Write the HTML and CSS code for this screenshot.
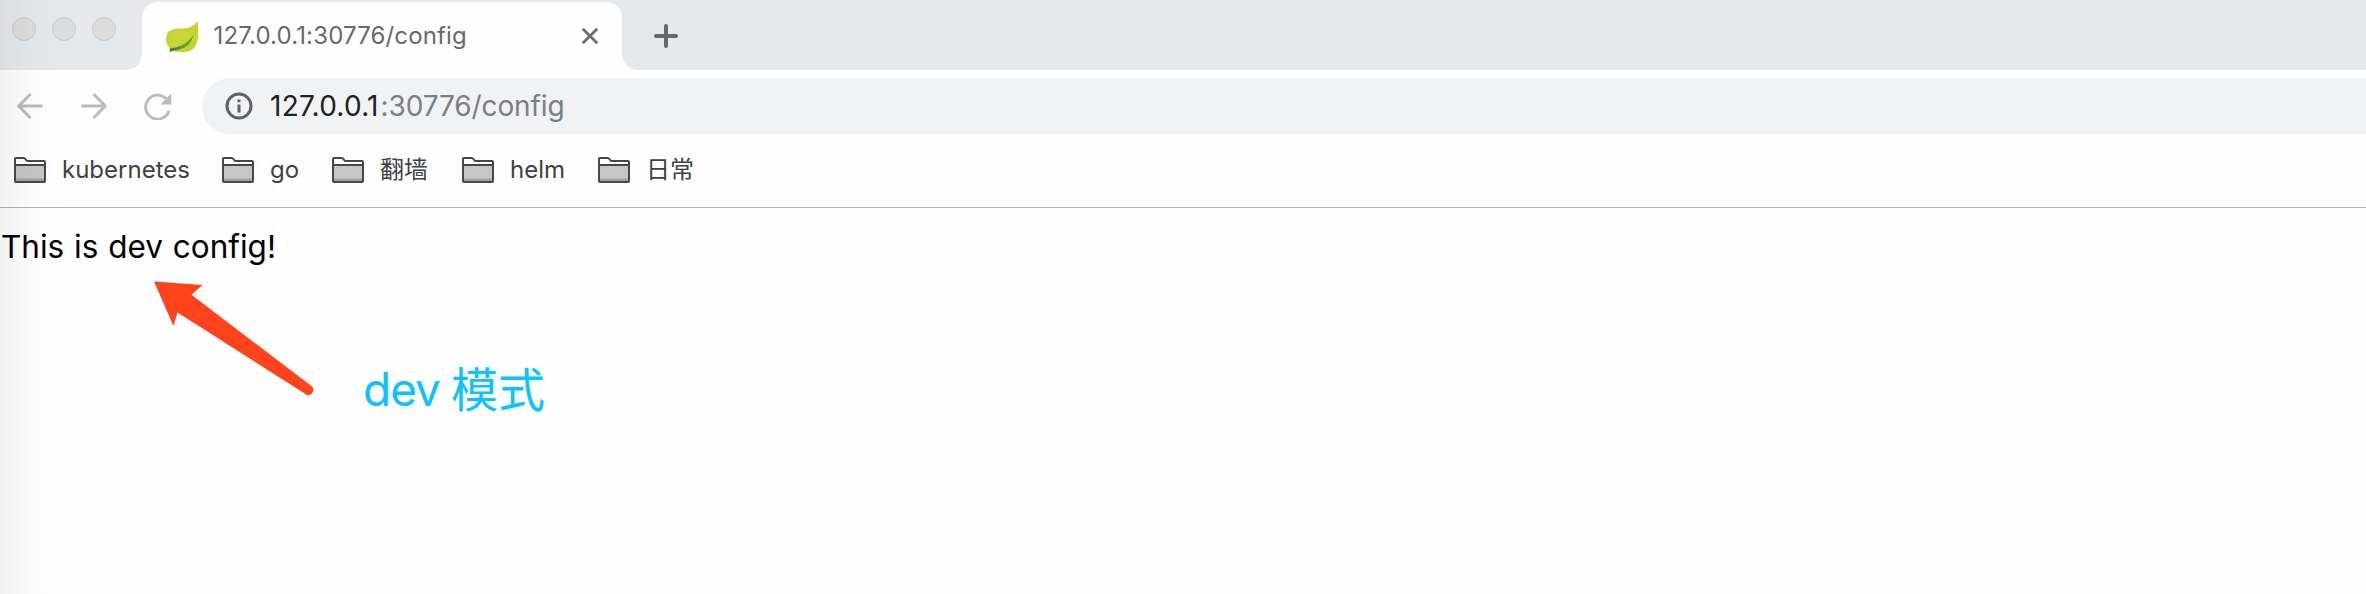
FILE: index.html
```html
<!DOCTYPE html>
<html lang="zh-CN">
<head>
<meta charset="utf-8">
<title>127.0.0.1:30776/config</title>
<link rel="stylesheet" href="styles.css">
</head>
<body>
<svg class="defs" aria-hidden="true">
  <symbol id="folder" viewBox="0 0 32 26">
    <path d="M1 24V2Q1 1 2 1H9.5Q11 1 11.7 2.3L12.4 3.4Q13 4 14 4H30Q31 4 31 5V24Q31 25 30 25H2Q1 25 1 24Z" fill="#fff"/>
    <path d="M1 8H31V24H1Z" fill="#c6c6c6"/>
    <path d="M1 21.5H31V24H1Z" fill="#a3a3a3"/>
    <path d="M1 24V2Q1 1 2 1H9.5Q11 1 11.7 2.3L12.4 3.4Q13 4 14 4H30Q31 4 31 5V24Q31 25 30 25H2Q1 25 1 24ZM1 8H31" fill="none" stroke="#474747" stroke-width="2"/>
  </symbol>
</svg>
<div class="window">
  <header class="tabstrip">
    <div class="lights"><i class="light"></i><i class="light"></i><i class="light"></i></div>
    <div class="tab">
      <svg class="favicon" viewBox="0 0 32 32">
        <path d="M31.5 0.5Q33 7 32 16Q31 30 19 31Q11 32 6 29.5L4.500 31L4 28Q-2 20 1 13Q4 7.500 13 7.500Q25 8.500 31.500 .5Z" fill="#c3d42f"/>
        <path d="M3 14Q5 10 13 10.500Q23 12 29 7Q25 20 13 24Q7 26 3 24Z" fill="#cfd53e" opacity=".7"/>
        <path d="M4 31L3.500 27.500Q20 26 27.500 14Q24 27 12 29Q8 29.500 4 31Z" fill="#669f32"/>
        <path d="M4 31L4 27.500Q10 27.500 15 25.500Q13 29 7 29Z" fill="#3f8746"/>
      </svg>
      <span class="tab-title">127.0.0.1:30776/config</span>
      <svg class="close" viewBox="0 0 16 16"><path d="M.8 .8L15.200 15.200M15.200 .8L.8 15.200"/></svg>
    </div>
    <div class="after-tab"><svg class="plus" viewBox="0 0 24 24"><path d="M12 2V22M2 12H22"/></svg></div>
  </header>
  <nav class="toolbar">
    <svg class="nav-icon back" viewBox="0 0 26 26"><path d="M25.500 13H2M13.500 1L1.800 13L13.500 25"/></svg>
    <svg class="nav-icon forward" viewBox="0 0 26 26"><path d="M.5 13H24M12.500 1L24.200 13L12.500 25"/></svg>
    <svg class="nav-icon reload" viewBox="0 0 28 27"><path d="M25 18A12 12 0 1 1 22 5.500"/><path class="solid" d="M27.300 .5V11.500H16.300Z"/></svg>
    <div class="omnibox">
      <svg class="info" viewBox="0 0 28 28"><circle cx="14" cy="14" r="12"/><path d="M14 12.500V20.500M14 7.500V10.300"/></svg>
      <span class="host">127.0.0.1</span><span class="path">:30776/config</span>
    </div>
  </nav>
  <div class="bookmarks">
    <div class="bookmark kubernetes"><svg class="folder"><use href="#folder"/></svg><span>kubernetes</span></div>
    <div class="bookmark go"><svg class="folder"><use href="#folder"/></svg><span>go</span></div>
    <div class="bookmark wall"><svg class="folder"><use href="#folder"/></svg><span class="cjk">翻墙</span></div>
    <div class="bookmark helm"><svg class="folder"><use href="#folder"/></svg><span>helm</span></div>
    <div class="bookmark daily"><svg class="folder"><use href="#folder"/></svg><span class="cjk">日常</span></div>
  </div>
  <main class="page">
    <p class="message">This is dev config!</p>
    <svg class="arrow" viewBox="0 0 162 116"><path d="M0 .5L48.500 4L37.500 13.800L158 105.500A5.200 5.200 0 0 1 153 114L23.500 31.500L19.500 45Z"/></svg>
    <div class="note"><span class="note-latin">dev</span><span class="note-cjk">模式</span></div>
  </main>
  <div class="edge-shade"></div>
</div>
</body>
</html>
```
FILE: styles.css
```css
body { margin: 0; background: #fff; }
.defs { position: absolute; width: 0; height: 0; }
.window {
  position: relative;
  width: 2366px;
  height: 594px;
  overflow: hidden;
  background: #fefefe;
  font-family: Inter, "Noto Sans CJK SC", sans-serif;
}
svg { display: block; flex: none; }
span { white-space: nowrap; }

.tabstrip { display: flex; height: 70px; background: linear-gradient(#e5e9ec 2px, #fefefe 2px); }
.lights {
  box-sizing: border-box;
  width: 142px;
  padding: 17px 0 0 12px;
  display: flex;
  gap: 16px;
  background: #e5e9ec;
  border-bottom-right-radius: 16px;
}
.light {
  box-sizing: border-box;
  width: 24px;
  height: 24px;
  border: 1px solid #c9cbcc;
  border-radius: 50%;
  background: #dcdcdc;
}
.tab {
  box-sizing: border-box;
  width: 480px;
  display: flex;
  align-items: flex-start;
  padding: 21px 24px 0 24px;
  position: relative;
}
.tab::before, .tab::after {
  content: "";
  position: absolute;
  top: 0;
  width: 16px;
  height: 18px;
}
.tab::before { left: 0; background: radial-gradient(circle at 16px 18px, #fefefe 15.5px, #e5e9ec 16.5px); }
.tab::after { right: 0; background: radial-gradient(circle at 0 18px, #fefefe 15.5px, #e5e9ec 16.5px); }
.favicon { width: 32px; height: 32px; }
.tab-title {
  width: 368.5px;
  margin-left: 15.5px;
  font-size: 24px;
  line-height: 30px;
  letter-spacing: 0.15px;
  color: #67696b;
}
.close { width: 16px; height: 16px; margin-top: 7px; }
.close path { fill: none; stroke: #696d70; stroke-width: 2.8; }
.after-tab { flex: 1; padding: 22px 0 0 32px; background: #e5e9ec; border-bottom-left-radius: 16px; }
.plus { width: 24px; height: 24px; margin-top: 2px; }
.plus path { fill: none; stroke: #66696b; stroke-width: 4; stroke-linecap: round; }

.toolbar { display: flex; align-items: center; height: 72px; padding-left: 17px; }
.nav-icon { fill: none; stroke: #babbbc; stroke-width: 2.9; }
.back, .forward { width: 26px; height: 26px; }
.forward { margin-left: 38px; }
.reload { width: 28px; height: 27px; margin-left: 37px; }
.solid { fill: #babbbc; stroke: none; }
.omnibox {
  box-sizing: border-box;
  flex: 1;
  height: 56px;
  margin-left: 30px;
  padding-left: 22px;
  display: flex;
  align-items: center;
  border-radius: 28px 0 0 28px;
  background: #f1f2f4;
  font-size: 28px;
}
.info { width: 28px; height: 28px; margin-left: 0.5px; fill: none; stroke: #5f6368; stroke-width: 3; }
.host { width: 110.5px; margin-left: 17.5px; letter-spacing: 0.25px; color: #202124; }
.path { letter-spacing: -0.1px; color: #7a8085; }

.bookmarks {
  box-sizing: border-box;
  height: 66px;
  padding: 15px 0 0 14px;
  display: flex;
  border-bottom: 1px solid #b4b4b4;
}
.bookmark { display: flex; height: 26px; align-items: center; font-size: 24px; color: #3f4144; }
.bookmark span { margin-left: 16px; padding-bottom: 2px; }
.bookmark .cjk { font-family: "Noto Sans CJK SC", sans-serif; padding-bottom: 5px; }
.folder { width: 32px; height: 26px; }
.kubernetes { width: 208px; }
.go { width: 110px; }
.wall { width: 130px; }
.helm { width: 136px; }

.page { position: relative; }
.message {
  margin: 0;
  padding: 19px 0 0 1px;
  font-size: 31.5px;
  line-height: 39px;
  word-spacing: 1px;
  color: #000;
}
.arrow { position: absolute; left: 154px; top: 73px; width: 162px; height: 116px; fill: #ff441c; }
.note {
  position: absolute;
  left: 363px;
  top: 151px;
  display: flex;
  align-items: center;
  gap: 11px;
  height: 60px;
  font-size: 46px;
  color: #0cc2ff;
}
.note-latin { letter-spacing: -1px; }
.note-cjk { font-family: "Noto Sans CJK SC", sans-serif; font-size: 47px; padding-bottom: 6px; }
.edge-shade {
  position: absolute;
  left: 0;
  top: 0;
  width: 68px;
  height: 594px;
  background: linear-gradient(90deg, rgba(0,0,0,.048), rgba(0,0,0,.014) 45%, rgba(0,0,0,.004) 80%, transparent);
}
```
